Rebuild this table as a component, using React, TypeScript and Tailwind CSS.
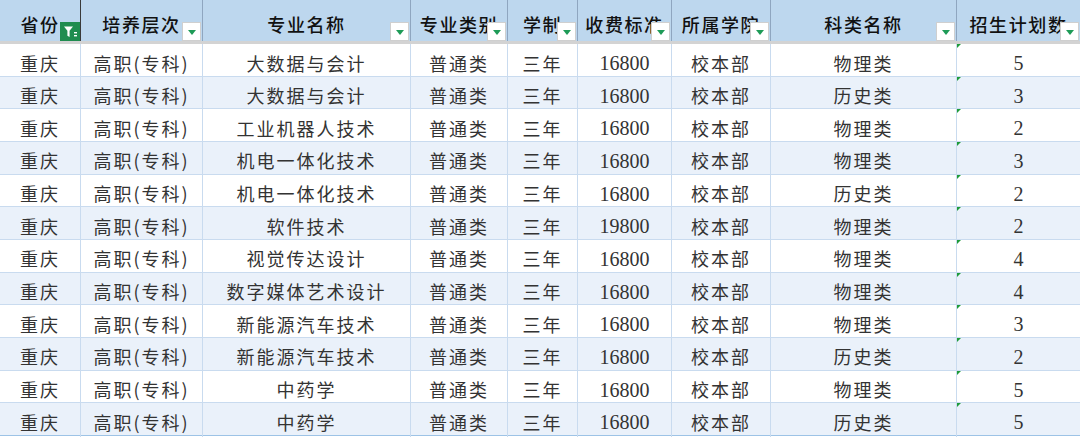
import React from "react";

const COLS = "grid-cols-[81px_122px_208px_97px_70px_94px_99px_186px_123px]";

const headers = ["省份", "培养层次", "专业名称", "专业类别", "学制", "收费标准", "所属学院", "科类名称", "招生计划数"];

const rows: [string, string, string, string][] = [
  ["大数据与会计", "16800", "物理类", "5"],
  ["大数据与会计", "16800", "历史类", "3"],
  ["工业机器人技术", "16800", "物理类", "2"],
  ["机电一体化技术", "16800", "物理类", "3"],
  ["机电一体化技术", "16800", "历史类", "2"],
  ["软件技术", "19800", "物理类", "2"],
  ["视觉传达设计", "16800", "物理类", "4"],
  ["数字媒体艺术设计", "16800", "物理类", "4"],
  ["新能源汽车技术", "16800", "物理类", "3"],
  ["新能源汽车技术", "16800", "历史类", "2"],
  ["中药学", "16800", "物理类", "5"],
  ["中药学", "16800", "历史类", "5"],
];

const cjk = { fontFamily: '"Noto Sans CJK SC", "Noto Sans", sans-serif' };
const num = { fontFamily: '"Liberation Serif", "Noto Sans CJK SC", serif' };

function Dropdown() {
  return (
    <div className="absolute right-[1px] bottom-0 w-[19px] h-[19px] bg-white border border-[#cfcfcf] flex items-center justify-center">
      <div className="w-0 h-0 border-l-[4px] border-r-[4px] border-t-[5px] border-l-transparent border-r-transparent border-t-[#1e9b57] mt-[2px]" />
    </div>
  );
}

function FilterIcon() {
  return (
    <div className="absolute right-0 bottom-0 w-[20px] h-[19px] bg-[#1f8c4f] flex items-center justify-center">
      <svg width="15" height="13" viewBox="0 0 15 13">
        <path d="M1 1.5 H10 L6.6 5.8 V12 L4.4 10.8 V5.8 Z" fill="white" />
        <rect x="11" y="7" width="3" height="1.4" fill="white" />
        <rect x="11" y="10" width="3" height="1.4" fill="white" />
      </svg>
    </div>
  );
}

export default function App() {
  return (
    <div className="w-[1080px] h-[437px] bg-white overflow-hidden" style={cjk}>
      <div className={`grid ${COLS} h-[44px] bg-[#bdd7ee] border-b-[3px] border-[#d3d3d3]`}>
        {headers.map((h, i) => (
          <div
            key={h}
            className={`relative flex items-center justify-center pt-[8px] text-[18px] tracking-[1.6px] font-medium text-[#111] whitespace-nowrap overflow-hidden border-r ${
              i === 0 ? "border-[#3a3a3a]" : "border-[#8fa6c0]"
            } ${i === 8 ? "border-r-0" : ""}`}
          >
            <span>{h}</span>
            {i === 0 ? <FilterIcon /> : <Dropdown />}
          </div>
        ))}
      </div>
      {rows.map((r, idx) => {
        const last = idx === rows.length - 1;
        const cells = ["重庆", "高职(专科)", r[0], "普通类", "三年", r[1], "校本部", r[2], r[3]];
        return (
          <div
            key={idx}
            className={`grid ${COLS} h-[32.67px] border-b ${last ? "border-[#9dc3e6]" : "border-[#c9dbef]"} ${
              idx % 2 === 1 ? "bg-[#eaf1fa]" : "bg-white"
            }`}
          >
            {cells.map((c, i) => {
              const isNum = i === 5 || i === 8;
              return (
                <div
                  key={i}
                  className={`relative flex items-center justify-center pt-[4px] whitespace-nowrap text-[#333] border-r border-[#c9dbef] ${
                    i === 8 ? "border-r-0" : ""
                  } ${isNum ? "text-[20px]" : "text-[18px] tracking-[2px]"}`}
                  style={isNum ? num : undefined}
                >
                  {i === 8 && (
                    <div className="absolute left-0 top-0 w-0 h-0 border-t-[4px] border-r-[4px] border-t-[#1e9b3a] border-r-transparent" />
                  )}
                  <span>{c}</span>
                </div>
              );
            })}
          </div>
        );
      })}
    </div>
  );
}
